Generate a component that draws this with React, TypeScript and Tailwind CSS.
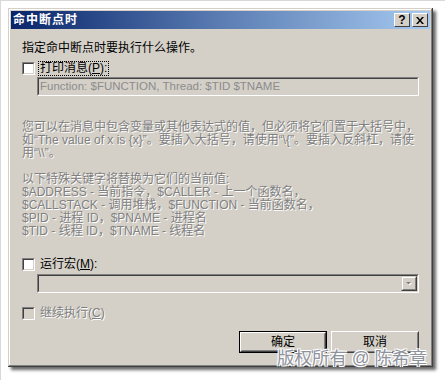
import React from "react";

const FONT = { fontFamily: '"Liberation Sans", "Noto Sans CJK SC", sans-serif' };

function Check({ disabled }: { disabled?: boolean }) {
  return (
    <div className="w-[13px] h-[13px] shrink-0 border border-t-[#808080] border-l-[#808080] border-b-white border-r-white">
      <div
        className={
          disabled
            ? "w-full h-full border border-t-[#404040] border-l-[#404040] border-b-[#d4d0c8] border-r-[#d4d0c8] bg-[#d4d0c8]"
            : "w-full h-full border border-t-[#404040] border-l-[#404040] border-b-[#d4d0c8] border-r-[#d4d0c8] bg-white"
        }
      />
    </div>
  );
}

function TitleBtn({ children }: { children: React.ReactNode }) {
  return (
    <div className="w-[16px] h-[14px] bg-[#d4d0c8] border border-t-white border-l-white border-b-[#404040] border-r-[#404040] flex items-center justify-center text-black text-[12px] font-bold leading-none">
      {children}
    </div>
  );
}

const gray = "text-[#808080] [text-shadow:1px_1px_0_#ffffff]";

export default function App() {
  return (
    <div className="w-[445px] h-[380px] bg-white relative overflow-hidden border-l border-t border-[#d8d8d8]" style={FONT}>
      <div className="mt-[7px] ml-[7px] w-[425px] h-[359px] bg-[#d4d0c8] p-[3px] shadow-[inset_-1px_-1px_0_#404040,inset_1px_1px_0_#d4d0c8,inset_-2px_-2px_0_#808080,inset_2px_2px_0_#ffffff,3px_3px_3px_rgba(0,0,0,0.6)] flex flex-col">
        {/* title bar */}
        <div className="h-[18px] bg-gradient-to-r from-[#0a246a] via-[#5b7db3] to-[#a6caf0] flex items-center pl-[2px] pr-[2px]">
          <span className="text-white text-[12px] font-bold leading-none flex-1 tracking-[1px]">命中断点时</span>
          <div className="flex gap-[2px]">
            <TitleBtn>?</TitleBtn>
            <TitleBtn>
              <svg width="8" height="7" viewBox="0 0 8 7">
                <path d="M0 0h2l2 2.5L6 0h2L5 3.5 8 7H6L4 4.5 2 7H0l3-3.5z" fill="#000" />
              </svg>
            </TitleBtn>
          </div>
        </div>

        {/* client */}
        <div className="pl-[11px] pr-[11px] flex flex-col text-[12px] leading-[13px] text-black">
          <div className="mt-[13px]">指定命中断点时要执行什么操作。</div>

          <div className="mt-[7px] flex items-center h-[13px]">
            <Check />
            <span className="ml-[4px] outline outline-1 outline-dotted outline-black px-[1px]">
              打印消息(<span className="underline">P</span>):
            </span>
          </div>

          <div className="ml-[15px] mt-[2px] w-[382px] h-[19px] border border-t-[#808080] border-l-[#808080] border-b-white border-r-white">
            <div className="h-full border border-t-[#404040] border-l-[#404040] border-b-[#d4d0c8] border-r-[#d4d0c8] bg-[#d4d0c8] flex items-center pl-[1px] text-[#8c8c8c] text-[11.5px]">
              Function: $FUNCTION, Thread: $TID $TNAME
            </div>
          </div>

          <div className={"mt-[25px] " + gray}>
            <div>您可以在消息中包含变量或其他表达式的值，但必须将它们置于大括号中，</div>
            <div>如“The value of x is {"{x}"}”。要插入大括号，请使用“\{"{"}”。要插入反斜杠，请使</div>
            <div>用“\\”。</div>
            <div className="h-[13px]" />
            <div>以下特殊关键字将替换为它们的当前值:</div>
            <div>$ADDRESS - 当前指令，$CALLER - 上一个函数名，</div>
            <div>$CALLSTACK - 调用堆栈，$FUNCTION - 当前函数名，</div>
            <div>$PID - 进程 ID，$PNAME - 进程名</div>
            <div>$TID - 线程 ID，$TNAME - 线程名</div>
          </div>

          <div className="mt-[20px] flex items-center h-[13px]">
            <Check />
            <span className="ml-[5px]">
              运行宏(<span className="underline">M</span>):
            </span>
          </div>

          <div className="ml-[15px] mt-[3px] w-[382px] h-[19px] border border-t-[#808080] border-l-[#808080] border-b-white border-r-white">
            <div className="h-full border border-t-[#404040] border-l-[#404040] border-b-[#d4d0c8] border-r-[#d4d0c8] bg-[#d4d0c8] flex items-center justify-end">
              <div className="w-[16px] h-[15px] border border-t-[#d4d0c8] border-l-[#d4d0c8] border-b-[#404040] border-r-[#404040]">
                <div className="w-full h-full border border-t-white border-l-white border-b-[#808080] border-r-[#808080] flex items-center justify-center">
                  <svg width="8" height="5" viewBox="0 0 8 5">
                    <path d="M1 1h5L3.5 3.5z" fill="#ffffff" transform="translate(1 1)" />
                    <path d="M1 1h5L3.5 3.5z" fill="#808080" />
                  </svg>
                </div>
              </div>
            </div>
          </div>

          <div className="mt-[14px] flex items-center h-[13px]">
            <Check disabled />
            <span className={"ml-[5px] " + gray}>
              继续执行(<span className="underline">C</span>)
            </span>
          </div>

          <div className="mt-[11px] flex justify-end gap-[4px]">
            <div className="w-[88px] h-[22px] border border-black">
              <div className="w-full h-full border border-t-white border-l-white border-b-[#404040] border-r-[#404040]">
                <div className="w-full h-full border border-t-[#d4d0c8] border-l-[#d4d0c8] border-b-[#808080] border-r-[#808080] flex items-center justify-center">
                  确定
                </div>
              </div>
            </div>
            <div className="w-[88px] h-[22px] border border-t-white border-l-white border-b-[#404040] border-r-[#404040]">
              <div className="w-full h-full border border-t-[#d4d0c8] border-l-[#d4d0c8] border-b-[#808080] border-r-[#808080] flex items-center justify-center">
                取消
              </div>
            </div>
          </div>
        </div>
      </div>

      <div className="absolute left-[276px] top-[348px] text-[17.5px] leading-[18px] text-[#8e929c] whitespace-nowrap [text-shadow:0_0_1px_#ffffff,1px_1px_0_#ffffff,-1px_-1px_0_#ffffff,1px_-1px_0_#ffffff,-1px_1px_0_#ffffff]">
        版权所有 @ 陈希章
      </div>
    </div>
  );
}
